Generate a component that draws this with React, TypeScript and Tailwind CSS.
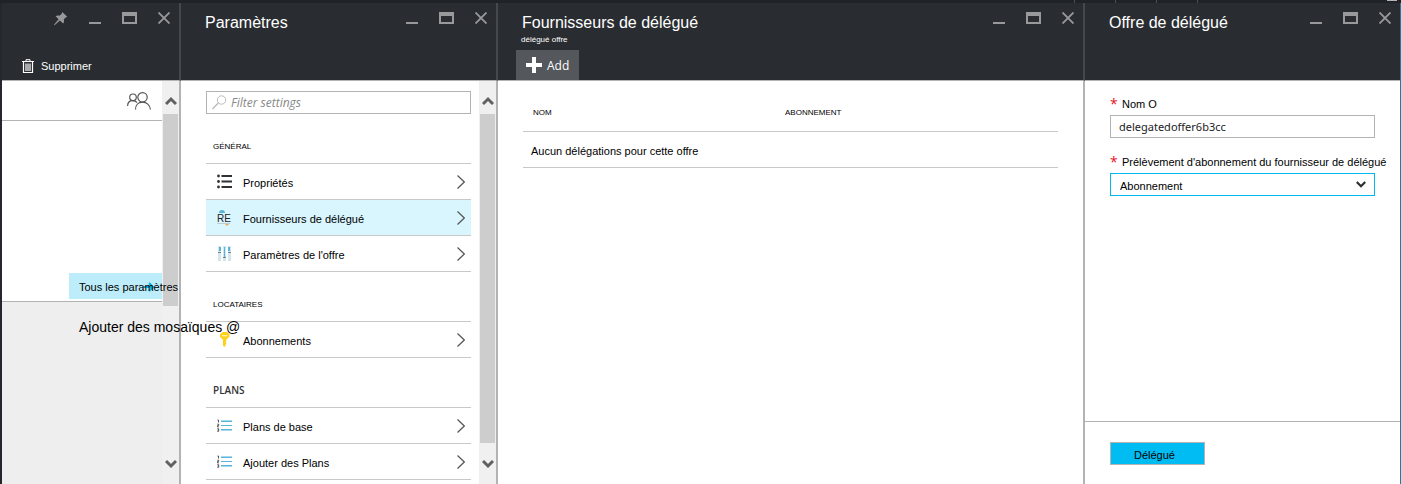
import React from "react";

function Minimize() {
  return (
    <button aria-label="Réduire" className="flex h-3 w-3 items-end">
      <span className="block h-[2px] w-3 bg-[#98999b]" />
    </button>
  );
}

function Maximize() {
  return (
    <button
      aria-label="Agrandir"
      className="h-3 w-[15px] border-2 border-t-4 border-[#98999b]"
    />
  );
}

function Close() {
  return (
    <button aria-label="Fermer" className="h-3 w-3">
      <svg viewBox="0 0 12 12" className="h-3 w-3" fill="none" stroke="#98999b" strokeWidth="1.8">
        <path d="M.5.5l11 11M11.5.5l-11 11" />
      </svg>
    </button>
  );
}

function Pin() {
  return (
    <button aria-label="Épingler" className="h-[14px] w-[14px]">
      <svg viewBox="0 0 14 14" className="h-[14px] w-[14px]" fill="#98999b">
        <path d="M8.2 0L13.3 4.8l-1.6.6-2 2.200c.6 1.500.4 2.800-.5 3.900L5.900 8.600.6 13.300l-.6-.5L4.600 7.300 1.600 4.300c1.200-.9 2.500-1 3.900-.5L7.900 1.600z" />
      </svg>
    </button>
  );
}

type BladeProps = {
  title?: string;
  subtitle?: string;
  pinned?: boolean;
  command?: React.ReactNode;
  className: string;
  children: React.ReactNode;
};

function Blade({ title, subtitle, pinned, command, className, children }: BladeProps) {
  return (
    <section className={`flex flex-col ${className}`}>
      <header className="flex h-[78px] flex-col border-r-2 border-b border-r-[#46494c] border-b-[#b3b3b3] bg-[#292d31]">
        <div className="flex items-start justify-between pt-[9px] pr-[9px] pl-6">
          <h2 className="h-5 text-base leading-[22px] whitespace-nowrap text-white">{title}</h2>
          <div className="flex gap-[21px]">
            {pinned && <Pin />}
            <Minimize />
            <Maximize />
            <Close />
          </div>
        </div>
        {subtitle && <p className="pl-[23px] text-[8px] leading-4 text-white">{subtitle}</p>}
        {command && <div className="mt-auto flex h-[30px]">{command}</div>}
      </header>
      <div className="flex flex-1 border-r-2 border-[#b3b3b3] bg-white">{children}</div>
    </section>
  );
}

function Arrow({ down }: { down?: boolean }) {
  return (
    <svg viewBox="0 0 12 10" className="h-[10px] w-3" fill="none" stroke="#606060" strokeWidth="3">
      <path d={down ? "M1 2l5 5 5-5" : "M1 8l5-5 5 5"} />
    </svg>
  );
}

function Scrollbar({ thumb }: { thumb: string }) {
  return (
    <div className="flex w-[17px] shrink-0 flex-col bg-[#f0f0f0] px-px">
      <div className="flex h-[33px] items-center justify-center pt-[6px]">
        <Arrow />
      </div>
      <div className="flex flex-1 flex-col">
        <div className={`bg-[#cdcdcd] ${thumb}`} />
      </div>
      <div className="flex h-[41px] items-center justify-center">
        <Arrow down />
      </div>
    </div>
  );
}

function PropertiesIcon() {
  return (
    <svg viewBox="0 0 15 15" className="h-[15px] w-[15px]" fill="#2f3237">
      <circle cx="1.500" cy="2" r="1.400" />
      <circle cx="1.500" cy="7.500" r="1.400" />
      <circle cx="1.500" cy="13" r="1.400" />
      <path d="M4.500 1H15v2H4.500zM4.500 6.500H15v2H4.500zM4.500 12H15v2H4.500z" />
    </svg>
  );
}

function ProvidersIcon() {
  return (
    <span className="flex h-[15px] w-[15px] flex-col">
      <svg viewBox="0 0 6 3" className="ml-[2px] h-[3px] w-[6px] shrink-0">
        <path d="M0 3a3 3 0 0 1 6 0z" fill="#59b4d9" />
      </svg>
      <span className="h-[10px] text-[10px] leading-[11px] text-[#222]">RE</span>
      <svg viewBox="0 0 14 3" className="h-[3px] w-[14px] shrink-0">
        <path d="M0 .5h13" stroke="#b9cdd3" />
        <path d="M8 1h4l-2 2z" fill="#f5a64a" />
      </svg>
    </span>
  );
}

function SlidersIcon() {
  return (
    <svg viewBox="0 0 15 15" className="h-[15px] w-[15px]">
      <path d="M1 0h3v15H1zM6 0h3v15H6zM11 0h3v15h-3z" fill="#d3e6ee" />
      <path d="M2 1h2v4H2zM7 1h1v10H7zM11 1h2v4h-2z" fill="#59b4d9" />
      <path d="M1 6h3v1H1zM6 11h3v1H6zM11 6h3v1h-3z" fill="#7a8285" />
    </svg>
  );
}

function KeyIcon() {
  return (
    <svg viewBox="0 0 15 15" className="h-[15px] w-[15px]">
      <path
        d="M5.500 0h4.500l2.500 2.500v2L10 7l-.8.800v1.400l-.8.600.8.800v1.400l-.8.700.2.700L7.500 15 6 13.800V7.800L3 5V2.500z"
        fill="#fcd116"
      />
      <path d="M5 3.800h5.500" stroke="#fff" strokeWidth=".9" />
    </svg>
  );
}

function PlansIcon() {
  return (
    <svg viewBox="0 0 15 13" className="h-[13px] w-[15px]">
      <path d="M4 1h11v2H4zM4 6h11v1H4zM4 10h11v2H4z" fill="#a6d8ee" />
      <path d="M4 2h11v1H4zM4 6h11v1H4zM4 10h11v1H4z" fill="#59b4d9" />
      <path
        d="M.5 1h1v2.500M.3 5.200h1.400v1.300H.5v1.400h1.400M.3 9.700h1.400v2.600H.3M.6 11h1"
        fill="none"
        stroke="#444"
        strokeWidth=".9"
      />
    </svg>
  );
}

type Item = { label: string; icon: React.ReactNode; active?: boolean };

function SettingsGroup({ title, titleClass, items }: { title: string; titleClass: string; items: Item[] }) {
  return (
    <div>
      <h3 className={`flex h-[49px] items-end pb-2 pl-[7px] leading-[17px] ${titleClass}`}>{title}</h3>
      <ul className="border-t border-[#c8c8c8]">
        {items.map((item) => (
          <li key={item.label} className="border-b border-[#c8c8c8]">
            <a
              href="#"
              className={`flex h-[35px] items-center pr-[6px] pl-[11px] ${item.active ? "bg-[#d9f5fe]" : ""}`}
            >
              {item.icon}
              <span className="ml-[11px] flex-1 pt-[3px]">{item.label}</span>
              <svg viewBox="0 0 8 14" className="h-[14px] w-2" fill="none" stroke="#555" strokeWidth="1.200">
                <path d="M.5.5L7.300 7 .5 13.500" />
              </svg>
            </a>
          </li>
        ))}
      </ul>
    </div>
  );
}

function Required() {
  return <span className="w-[7px] font-['Open_Sans',sans-serif] text-sm leading-4 text-[#e81123]">*</span>;
}

export default function App() {
  return (
    <div className="flex min-h-screen flex-col overflow-hidden bg-[#1f2327] font-['Liberation_Sans',Arial,sans-serif] text-[11px] text-black">
      <div className="flex h-[3px] justify-end gap-10 pr-1">
        <span className="w-px bg-[#4b4f53]" />
        <span className="w-px bg-[#4b4f53]" />
        <span className="w-px bg-[#4b4f53]" />
        <span className="w-px bg-[#4b4f53]" />
        <span className="ml-[149px] h-px w-[10px] bg-[#b5b5b5]" />
      </div>
      <main className="flex flex-1 border-r border-l-2 border-l-[#24282c] border-r-[#1d7fa8]">
        <Blade
          className="relative z-10 w-[179px] shrink-0"
          pinned
          command={
            <button className="ml-5 flex items-center gap-[7px] pt-[3px] text-white">
              <svg viewBox="0 0 12 16" className="h-4 w-3" fill="none" stroke="#fff">
                <path d="M0 2.500h12M4 2V.7h4V2" />
                <path d="M1.500 3v10.500h9V3M4 4.500v7.500M6 4.500v7.500M8 4.500v7.500" strokeWidth="1.200" />
              </svg>
              Supprimer
            </button>
          }
        >
          <div className="flex w-[160px] flex-col">
            <div className="flex h-10 items-center justify-end border-b border-[#b3b3b3] pr-[11px]">
              <svg viewBox="0 0 24 18" className="h-[18px] w-6" fill="none" stroke="#555" strokeWidth="1.200">
                <circle cx="15.500" cy="5.300" r="4.700" />
                <path d="M8.500 17.500c0-4.500 3-7.300 7-7.300s7.500 2.800 7.900 7.300" />
                <circle cx="6" cy="5.300" r="3.300" />
                <path d="M.6 14c0-3.300 2.200-5.300 5.200-5.300 1.800 0 3.300.6 4.200 1.900" />
              </svg>
            </div>
            <div className="flex h-[181px] flex-col items-end justify-end border-b border-[#b3b3b3] pb-[2px]">
              <a href="#" className="relative flex h-[26px] w-[93px] items-center bg-[#bdedfa] pt-[3px] pl-[10px] whitespace-nowrap">
                <svg
                  viewBox="0 0 12 10"
                  className="absolute top-[9px] right-[7px] h-[10px] w-3"
                  fill="none"
                  stroke="#00b4e6"
                  strokeWidth="2"
                >
                  <path d="M0 5h10M6 1l4 4-4 4" />
                </svg>
                <span className="relative">Tous les paramètres</span>
              </a>
            </div>
            <div className="flex-1 bg-[#eee] pt-[15px] pl-[77px] text-sm leading-5 whitespace-nowrap">
              <a href="#" className="relative">Ajouter des mosaïques @</a>
            </div>
          </div>
          <Scrollbar thumb="h-[192px]" />
        </Blade>

        <Blade title="Paramètres" className="w-[317px] shrink-0">
          <div className="flex-1 pt-[10px] pr-2 pb-1 pl-[25px]">
            <label className="flex h-[23px] items-center gap-1 border border-[#b3b3b3] px-[5px]">
              <svg viewBox="0 0 15 15" className="h-[15px] w-[15px]" fill="none" stroke="#bbb">
                <circle cx="9.500" cy="5" r="4.200" />
                <path d="M6.300 8L.5 14" strokeWidth="1.400" />
              </svg>
              <input
                aria-label="Filter settings"
                placeholder="Filter settings"
                className="min-w-0 flex-1 font-['Open_Sans',sans-serif] text-xs italic outline-none placeholder:text-[#888]"
              />
            </label>
            <SettingsGroup
              title="GÉNÉRAL"
              titleClass="text-[8px]"
              items={[
                { label: "Propriétés", icon: <PropertiesIcon /> },
                { label: "Fournisseurs de délégué", icon: <ProvidersIcon />, active: true },
                { label: "Paramètres de l'offre", icon: <SlidersIcon /> },
              ]}
            />
            <SettingsGroup
              title="LOCATAIRES"
              titleClass="text-[8px]"
              items={[{ label: "Abonnements", icon: <KeyIcon /> }]}
            />
            <SettingsGroup
              title="PLANS"
              titleClass="font-['Open_Sans',sans-serif] text-[10px] font-semibold text-[#333]"
              items={[
                { label: "Plans de base", icon: <PlansIcon /> },
                { label: "Ajouter des Plans", icon: <PlansIcon /> },
              ]}
            />
          </div>
          <Scrollbar thumb="flex-1" />
        </Blade>

        <Blade
          title="Fournisseurs de délégué"
          subtitle="délégué offre"
          className="min-w-0 flex-1"
          command={
            <button className="ml-[18px] flex items-center gap-[5px] bg-[#54575b] px-[10px] text-xs text-white">
              <svg viewBox="0 0 16 16" className="h-4 w-4" fill="#fff">
                <path d="M6 0h4v6h6v4h-6v6H6v-6H0V6h6z" />
              </svg>
              <span className="w-[22px] pt-px font-['Open_Sans',sans-serif]">Add</span>
            </button>
          }
        >
          <div className="flex-1 px-[25px]">
            <table className="w-full border-separate border-spacing-0 text-left">
              <thead>
                <tr className="h-[51px] text-[8px]">
                  <th className="w-[252px] border-b border-[#c8c8c8] pt-[13px] pl-[10px] font-normal">NOM</th>
                  <th className="border-b border-[#c8c8c8] pt-[13px] pl-[10px] font-normal">ABONNEMENT</th>
                </tr>
              </thead>
              <tbody>
                <tr className="h-9">
                  <td colSpan={2} className="border-b border-[#c8c8c8] pt-[3px] pl-2">
                    Aucun délégations pour cette offre
                  </td>
                </tr>
              </tbody>
            </table>
          </div>
        </Blade>

        <section className="flex w-[315px] shrink-0 flex-col">
          <header className="h-[78px] border-b border-[#b3b3b3] bg-[#292d31]">
            <div className="flex items-start justify-between pt-[9px] pr-[9px] pl-6">
              <h2 className="h-5 text-base leading-[22px] text-white">Offre de délégué</h2>
              <div className="flex gap-[21px]">
                <Minimize />
                <Maximize />
                <Close />
              </div>
            </div>
          </header>
          <form className="flex flex-1 flex-col bg-white">
            <div className="flex-1 px-[25px] pt-[15px]">
              <label htmlFor="nom" className="flex h-[19px] items-start gap-[5px] leading-4 whitespace-nowrap">
                <Required />
                Nom O
              </label>
              <input
                id="nom"
                defaultValue="delegatedoffer6b3cc"
                className="h-[23px] w-full border border-[#b3b3b3] px-2 font-['Noto_Sans',sans-serif] text-[11px] text-[#222] outline-none"
              />
              <label htmlFor="abo" className="mt-4 flex h-[19px] items-start gap-[5px] leading-4 whitespace-nowrap">
                <Required />
                Prélèvement d'abonnement du fournisseur de délégué
              </label>
              <div className="grid items-center">
                <select
                  id="abo"
                  className="col-start-1 row-start-1 h-[23px] w-full appearance-none border border-[#00b9f1] px-[9px] pt-[3px] outline-none"
                >
                  <option>Abonnement</option>
                </select>
                <svg
                  viewBox="0 0 10 7"
                  className="pointer-events-none col-start-1 row-start-1 mr-[9px] h-[7px] w-[10px] justify-self-end"
                  fill="none"
                  stroke="#2b2e33"
                  strokeWidth="2.200"
                >
                  <path d="M.8 1L5 5.200 9.200 1" />
                </svg>
              </div>
            </div>
            <footer className="h-[63px] border-t border-[#b3b3b3] px-[25px] pt-5">
              <button type="button" className="h-[23px] w-[95px] border border-[#b3b3b3] bg-[#00bcf2] pt-[3px] pr-[6px]">
                Délégué
              </button>
            </footer>
          </form>
        </section>
      </main>
    </div>
  );
}
